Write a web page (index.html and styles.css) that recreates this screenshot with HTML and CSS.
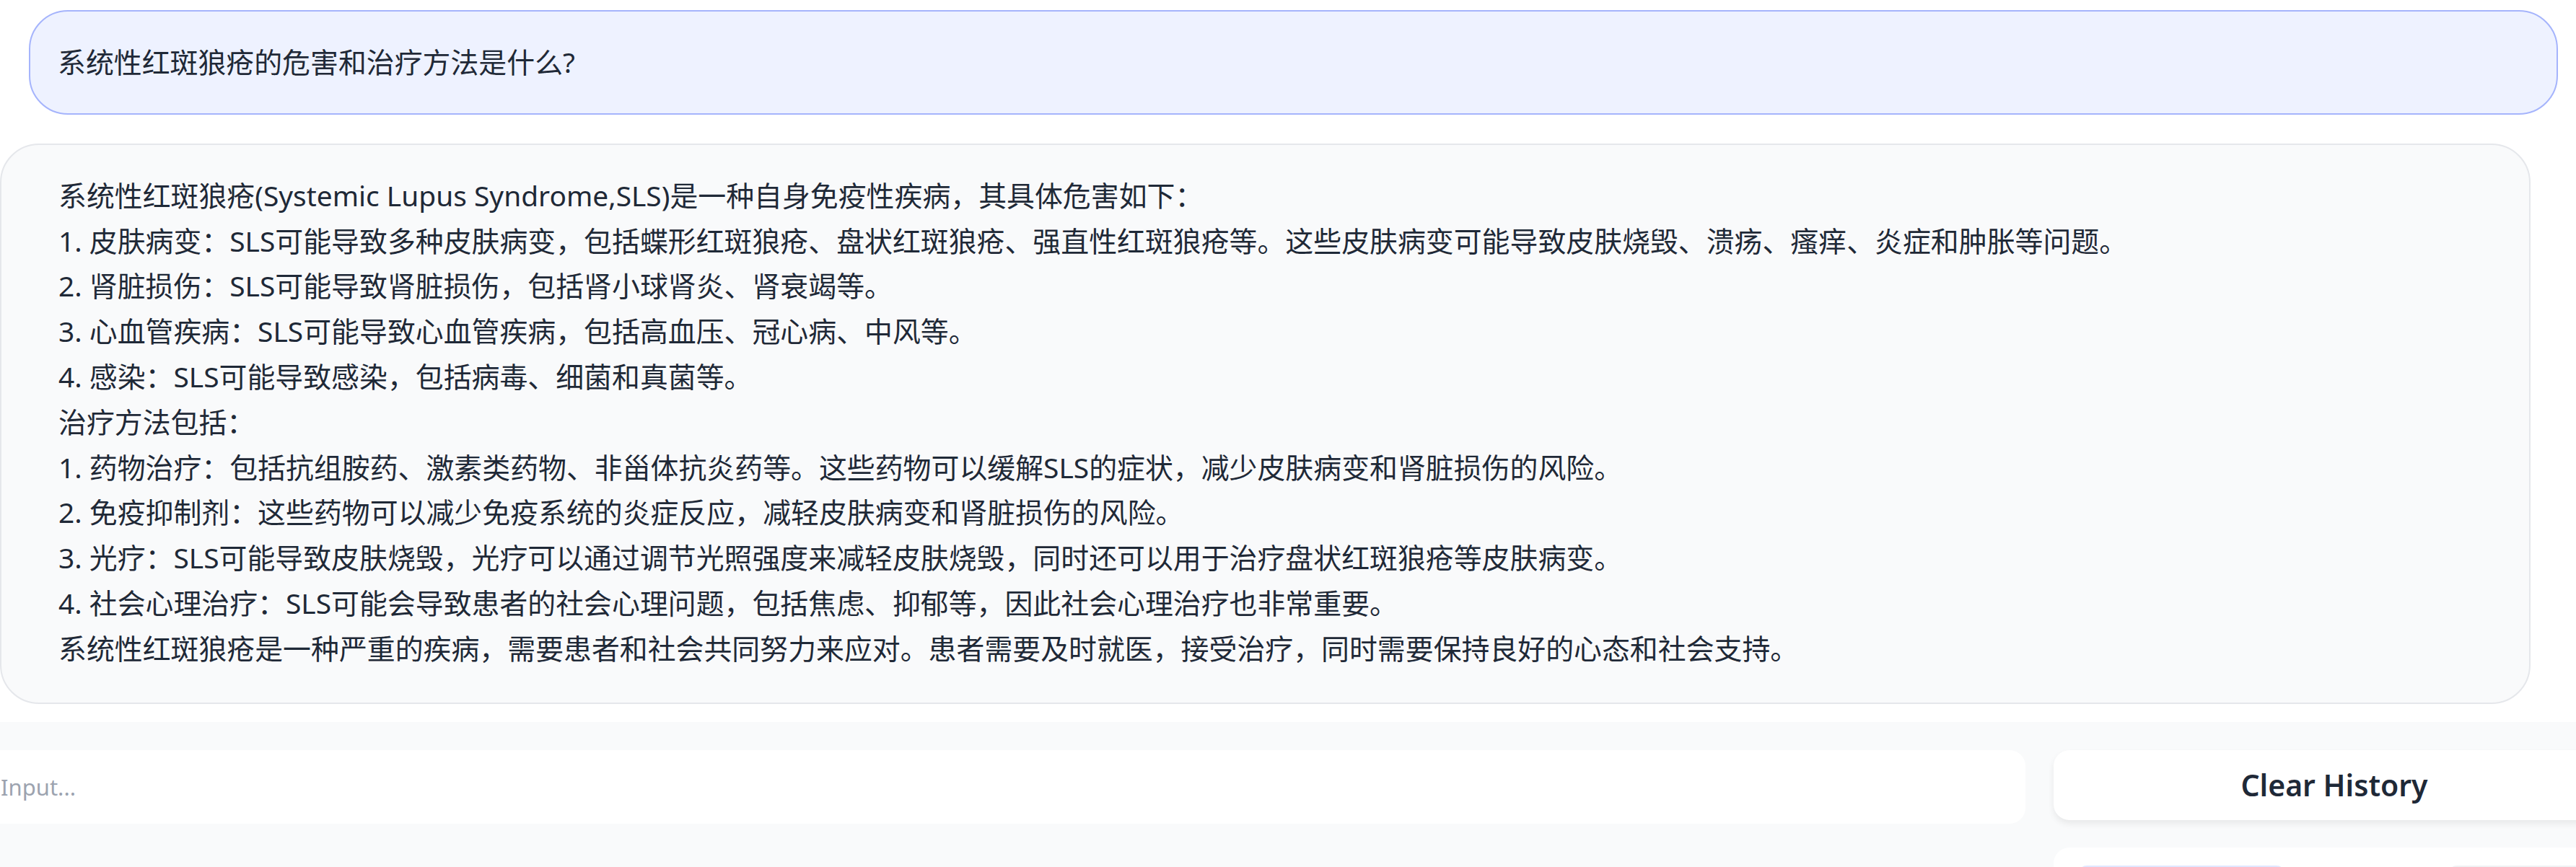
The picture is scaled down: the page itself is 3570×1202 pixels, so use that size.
FILE: index.html
```html
<!DOCTYPE html>
<html lang="zh">
<head>
<meta charset="utf-8">
<title>Chat</title>
<link rel="stylesheet" href="styles.css">
</head>
<body>
<div class="page">
  <div class="chat">
    <div class="msg user">
      <p>系统性红斑狼疮的危害和治疗方法是什么?</p>
    </div>
    <div class="msg bot">
      <p>系统性红斑狼疮(Systemic Lupus Syndrome,SLS)是一种自身免疫性疾病，其具体危害如下：</p>
      <p>1. 皮肤病变：SLS可能导致多种皮肤病变，包括蝶形红斑狼疮、盘状红斑狼疮、强直性红斑狼疮等。这些皮肤病变可能导致皮肤烧毁、溃疡、瘙痒、炎症和肿胀等问题。</p>
      <p>2. 肾脏损伤：SLS可能导致肾脏损伤，包括肾小球肾炎、肾衰竭等。</p>
      <p>3. 心血管疾病：SLS可能导致心血管疾病，包括高血压、冠心病、中风等。</p>
      <p>4. 感染：SLS可能导致感染，包括病毒、细菌和真菌等。</p>
      <p>治疗方法包括：</p>
      <p>1. 药物治疗：包括抗组胺药、激素类药物、非甾体抗炎药等。这些药物可以缓解SLS的症状，减少皮肤病变和肾脏损伤的风险。</p>
      <p>2. 免疫抑制剂：这些药物可以减少免疫系统的炎症反应，减轻皮肤病变和肾脏损伤的风险。</p>
      <p>3. 光疗：SLS可能导致皮肤烧毁，光疗可以通过调节光照强度来减轻皮肤烧毁，同时还可以用于治疗盘状红斑狼疮等皮肤病变。</p>
      <p>4. 社会心理治疗：SLS可能会导致患者的社会心理问题，包括焦虑、抑郁等，因此社会心理治疗也非常重要。</p>
      <p>系统性红斑狼疮是一种严重的疾病，需要患者和社会共同努力来应对。患者需要及时就医，接受治疗，同时需要保持良好的心态和社会支持。</p>
    </div>
  </div>
  <div class="controls">
    <div class="row">
      <div class="input-box">
        <span class="placeholder">Input...</span>
      </div>
      <div class="side">
        <button class="btn-clear">Clear History</button>
        <div class="card">
          <div class="chip"></div>
          <div class="field"></div>
        </div>
      </div>
    </div>
  </div>
</div>
</body>
</html>
```
FILE: styles.css
```css
html, body {
  margin: 0;
  padding: 0;
  background: #ffffff;
}
body {
  width: 3570px;
  height: 1202px;
  overflow: hidden;
  font-family: "Noto Sans", "Noto Sans CJK SC", sans-serif;
  color: #1f2937;
}
.page {
  display: flex;
  flex-direction: column;
}
.chat {
  display: flex;
  flex-direction: column;
  gap: 40px;
  padding-top: 14px;
}
.msg {
  box-sizing: border-box;
  border-radius: 54px;
  font-size: 38.9px;
  line-height: 62.8px;
}
.msg p {
  margin: 0;
  white-space: nowrap;
}
.user {
  margin-left: 40px;
  width: 3505px;
  background: #eef2ff;
  border: 2px solid #a5b4fc;
  padding: 39px 38px;
}
.bot {
  margin-left: 0;
  width: 3507px;
  background: #f9fafb;
  border: 2px solid #e5e7eb;
  padding: 39px 79px 43px 79px;
}
.controls {
  margin-top: 25px;
  background: #f9fafb;
  padding-top: 39px;
  height: 400px;
}
.row {
  display: flex;
  align-items: flex-start;
  gap: 39px;
  margin-left: -30px;
}
.input-box {
  box-sizing: border-box;
  width: 2837px;
  height: 102px;
  flex: none;
  background: #ffffff;
  border-radius: 22px;
  display: flex;
  align-items: center;
  padding-left: 31px;
}
.placeholder {
  font-size: 31px;
  color: #9ca3af;
  font-weight: 400;
}
.side {
  flex: none;
  width: 778px;
  display: flex;
  flex-direction: column;
  gap: 38px;
}
.btn-clear {
  height: 97px;
  border: none;
  background: #ffffff;
  border-radius: 22px;
  box-shadow: 0 5px 10px rgba(0, 0, 0, 0.07);
  font-family: "Noto Sans", sans-serif;
  font-weight: 600;
  font-size: 41px;
  color: #1f2937;
  padding: 0;
}
.card {
  background: #ffffff;
  border-radius: 22px;
  height: 200px;
  display: flex;
  align-items: flex-start;
  padding: 25px 34px;
  gap: 226px;
}
.chip {
  width: 298px;
  height: 80px;
  background: #e0e7ff;
  border-radius: 12px;
}
.field {
  width: 200px;
  height: 80px;
  background: #ffffff;
  border: 2px solid #f0f1f3;
  border-radius: 12px;
}
```
